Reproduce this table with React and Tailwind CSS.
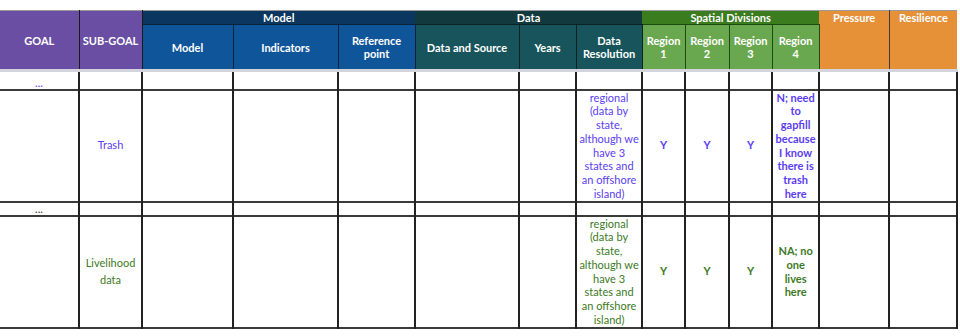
const cols = [79, 63, 91, 105, 77, 104, 57, 66, 43, 44, 43, 47, 70, 68];

const blue = "text-[#5a3df2]";
const green = "text-[#3d7a25]";

const resolution = ["regional", "(data by", "state,", "although we", "have 3", "states and", "an offshore", "island)"];

const Lines = ({ lines }) =>
  lines.map((l, i) => (
    <span key={i} className="block whitespace-nowrap">
      {l}
    </span>
  ));

const Body = ({ sub, color, region4 }) => (
  <tr className="h-[112px] border-b-2 border-[#3a3a3a]">
    <td className="border-r-2 border-[#222]" />
    <td className={`border-r-2 border-[#222] text-center text-[11px] ${color}`}>
      <Lines lines={sub} />
    </td>
    <td className="border-r-2 border-[#222]" />
    <td className="border-r-2 border-[#222]" />
    <td className="border-r-2 border-[#222]" />
    <td className="border-r-2 border-[#222]" />
    <td className="border-r-2 border-[#222]" />
    <td className={`border-r-2 border-[#222] px-0 text-center text-[11px] leading-[13.7px] ${color}`}>
      <Lines lines={resolution} />
    </td>
    <td className={`border-r-2 border-[#222] text-center text-[11px] font-bold ${color}`}>Y</td>
    <td className={`border-r-2 border-[#222] text-center text-[11px] font-bold ${color}`}>Y</td>
    <td className={`border-r-2 border-[#222] text-center text-[11px] font-bold ${color}`}>Y</td>
    <td className={`border-r-2 border-[#222] px-0 text-center text-[11px] font-bold leading-[13.7px] ${color}`}>
      <Lines lines={region4} />
    </td>
    <td className="border-r-2 border-[#222]" />
    <td className="border-r-2 border-[#222]" />
  </tr>
);

const Dots = ({ color, h, top }) => (
  <tr className={`${h} border-b-2 border-[#3a3a3a] ${top}`}>
    <td className={`border-r-2 border-[#222] text-center align-bottom text-[11px] leading-[12px] ${color}`}>...</td>
    {cols.slice(1).map((_, i) => (
      <td key={i} className="border-r-2 border-[#222]" />
    ))}
  </tr>
);

const Region = ({ n }) => (
  <th className="border-r border-[#1e4a10] bg-[#6aa84f]">
    Region
    <br />
    {n}
  </th>
);

export default function App() {
  return (
    <div className="h-[336px] w-[960px] bg-white pt-[10px] font-['Lato','Open_Sans',sans-serif]">
      <table className="w-[958px] table-fixed border-collapse">
        <colgroup>
          {cols.map((w, i) => (
            <col key={i} style={{ width: w }} />
          ))}
        </colgroup>
        <thead className="text-[11px] font-bold leading-[13px] text-white">
          <tr className="h-[14px] border-t border-[#999]">
            <th rowSpan={2} className="border-r border-[#1a1a1a] bg-[#6a4ea4]">GOAL</th>
            <th rowSpan={2} className="border-r border-[#1a1a1a] bg-[#6a4ea4]">SUB-GOAL</th>
            <th colSpan={3} className="border-b border-[#0a2238] bg-[#0b3660]">Model</th>
            <th colSpan={3} className="border-b border-[#0a2224] bg-[#123a3e]">Data</th>
            <th colSpan={4} className="border-b border-[#1e4a10] bg-[#3b7c1f]">Spatial Divisions</th>
            <th rowSpan={2} className="border-r border-[#3a3a3a] bg-[#e69138] align-top">Pressure</th>
            <th rowSpan={2} className="bg-[#e69138] align-top">Resilience</th>
          </tr>
          <tr className="h-[46px]">
            <th className="border-r border-[#0a2238] bg-[#0f559a]">Model</th>
            <th className="border-r border-[#0a2238] bg-[#0f559a]">Indicators</th>
            <th className="border-r border-[#0a2238] bg-[#0f559a]">Reference point</th>
            <th className="border-r border-[#0a2224] bg-[#17545b]">Data and Source</th>
            <th className="border-r border-[#0a2224] bg-[#17545b]">Years</th>
            <th className="border-r border-[#0a2224] bg-[#17545b]">Data Resolution</th>
            <Region n={1} />
            <Region n={2} />
            <Region n={3} />
            <Region n={4} />
          </tr>
        </thead>
        <tbody>
          <Dots color={blue} h="h-[19px]" top="border-t-[3px] border-t-[#d4d4dc]" />
          <Body
            sub={["Trash"]}
            color={blue}
            region4={["N; need", "to", "gapfill", "because", "I know", "there is", "trash", "here"]}
          />
          <Dots color="text-[#333]" h="h-[14px]" top="" />
          <Body
            sub={["Livelihood", "data"]}
            color={green}
            region4={["NA; no", "one", "lives", "here"]}
          />
        </tbody>
      </table>
    </div>
  );
}
